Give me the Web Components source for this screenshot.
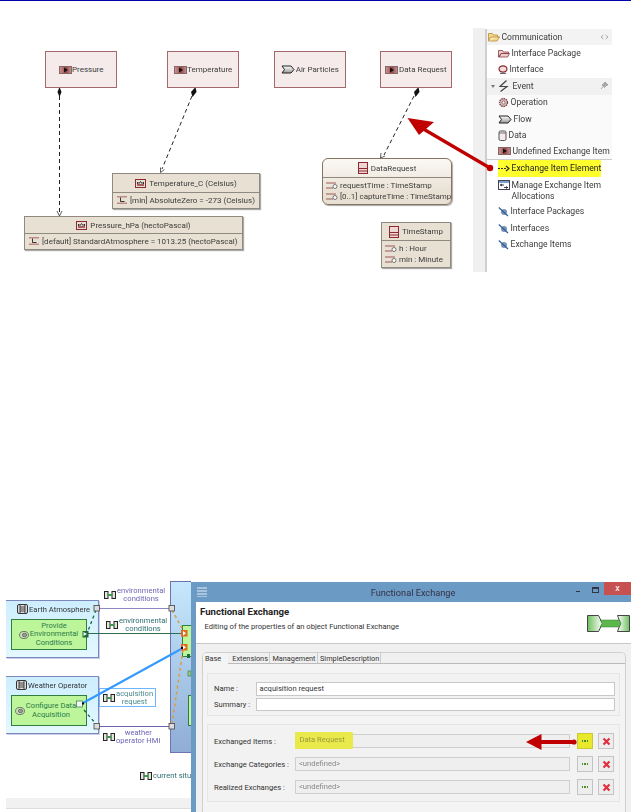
<!DOCTYPE html>
<html lang="en"><head><meta charset="utf-8"><title>Exchange items</title>
<style>
html,body{margin:0;padding:0;background:#fff;overflow:hidden}
body{width:631px;height:812px;font-family:Roboto,"Noto Sans",sans-serif;font-size:8.6px;color:#333;display:flex;flex-direction:column}
</style></head><body>
<top-rule></top-rule>
<figure-one>
  <uml-canvas>
    <svg slot="edges" width="473" height="279" viewBox="0 1 473 279" fill="none">
      <g stroke="#222" stroke-width="1" stroke-dasharray="4 3">
        <path d="M59.5 96V213"/>
        <path d="M192 96L162 169"/>
        <path d="M414 96L384 155"/>
      </g>
      <g fill="#111">
        <path d="M59.5 87l2 5-2 5-2-5z"/>
        <path d="M195.5 87l1 5-4 5-1.500-5z"/>
        <path d="M418.500 87l1 5-4 5-1.500-5z"/>
      </g>
      <g stroke="#333" stroke-width=".8">
        <path d="M57 211l2.500 5 2.500-5"/>
        <path d="M160.500 167.500v5l4-3"/>
        <path d="M381 153l-.5 5 4.500-2"/>
      </g>
    </svg>
    <ex-item style="left:45px;top:50px;width:70px" icon="item">Pressure</ex-item>
    <ex-item style="left:167px;top:50px;width:70px" icon="item">Temperature</ex-item>
    <ex-item style="left:274px;top:50px;width:70px" icon="flow">Air Particles</ex-item>
    <ex-item style="left:380px;top:50px;width:70px" icon="item">Data Request</ex-item>
    <uml-class style="left:112px;top:172px;width:146px" title-text="Temperature_C (Celsius)" icon="unit" head="18">
      <uml-row icon="literal">[min] AbsoluteZero = -273 (Celsius)</uml-row>
    </uml-class>
    <uml-class style="left:24px;top:215px;width:217px" title-text="Pressure_hPa (hectoPascal)" icon="unit" head="16">
      <uml-row icon="literal">[default] StandardAtmosphere = 1013.25 (hectoPascal)</uml-row>
    </uml-class>
    <uml-class style="left:322px;top:157px;width:128px" title-text="DataRequest" icon="cls" head="18" round>
      <uml-row icon="prop" tight>requestTime : TimeStamp</uml-row>
      <uml-row icon="prop" tight>[0..1] captureTime : TimeStamp</uml-row>
    </uml-class>
    <uml-class style="left:381px;top:221px;width:68px" title-text="TimeStamp" icon="cls" head="17">
      <uml-row icon="prop" tight>h : Hour</uml-row>
      <uml-row icon="prop" tight>min : Minute</uml-row>
    </uml-class>
  </uml-canvas>
  <tool-palette>
    <pal-row kind="head" icon="folder" trail="collapse">Communication</pal-row>
    <pal-row icon="pkg">Interface Package</pal-row>
    <pal-row icon="iface">Interface</pal-row>
    <pal-row kind="head2" icon="bolt" trail="pin">Event</pal-row>
    <pal-row kind="soft" icon="gear">Operation</pal-row>
    <pal-row kind="soft" icon="flow">Flow</pal-row>
    <pal-row kind="soft" icon="data">Data</pal-row>
    <pal-row kind="soft end" icon="item">Undefined Exchange Item</pal-row>
    <pal-row kind="mark" icon="dash">Exchange Item Element</pal-row>
    <pal-row kind="tall" icon="manage">Manage Exchange Item<br>Allocations</pal-row>
    <pal-row icon="strike">Interface Packages</pal-row>
    <pal-row icon="strike">Interfaces</pal-row>
    <pal-row icon="strike">Exchange Items</pal-row>
  </tool-palette>
  <svg style="position:absolute;left:0;top:0;pointer-events:none" width="631" height="279" viewBox="0 1 631 279">
    <path d="M490 168L420 127" stroke="#c00000" stroke-width="3.200" fill="none"/>
    <circle cx="490" cy="168" r="3.200" fill="#c00000"/>
    <path d="M407.500 118L434 122L419 135z" fill="#c00000"/>
  </svg>
</figure-one>
<figure-two>
  <sys-canvas>
    <big-block style="left:170px;top:1px;width:30px;height:172px"></big-block>
    <act-box style="left:6px;top:20px;width:92px;height:56px" label="Earth Atmosphere" lx="11"></act-box>
    <act-box style="left:6px;top:96px;width:92px;height:56px" label="Weather Operator" lx="10"></act-box>
    <fn-box style="left:11px;top:39px;width:76px;height:31px" tag="sf" tagx="7" pad="10">Provide<br>Environmental<br>Conditions</fn-box>
    <fn-box style="left:11px;top:115px;width:76px;height:31px" tag="sf" tagx="3" pad="4">Configure Data<br>Acquisition</fn-box>
    <fn-box style="left:182px;top:45px;width:30px;height:32px"></fn-box>
    <fn-box style="left:188px;top:115px;width:30px;height:31px"></fn-box>
    <note-box style="left:99px;top:108px;width:57px;height:19px"></note-box>
    <svg style="position:absolute;left:0;top:0" width="191" height="232" viewBox="0 580 191 232" fill="none">
      <path d="M97 608.500H171" stroke="#9088c4"/>
      <path d="M97 726.500H171" stroke="#6f64b0"/>
      <path d="M86 633.500H184" stroke="#2e6e50"/>
      <path d="M96 610L88 631" stroke="#126a3a" stroke-width="1.300" stroke-dasharray="3 3"/>
      <path d="M84 710L96 724" stroke="#126a3a" stroke-width="1.300" stroke-dasharray="3 3"/>
      <path d="M172 610L183 630" stroke="#e09a3c" stroke-width="1.500" stroke-dasharray="3 3"/>
      <path d="M183 650L172 724" stroke="#e09a3c" stroke-width="1.500" stroke-dasharray="3 3"/>
      <path d="M83 703L183 648" stroke="#3399ff" stroke-width="2"/>
      <g fill="#ddd" stroke="#444" stroke-width=".8">
        <rect x="94" y="605.500" width="5.500" height="5.500"/><rect x="169" y="605.500" width="5.500" height="5.500"/>
        <rect x="94" y="723.500" width="5.500" height="5.500"/><rect x="169" y="723.500" width="5.500" height="5.500"/>
      </g>
      <rect x="82.500" y="631" width="6" height="6.500" fill="#1d6b3a"/><path d="M83.500 632l3.500 2-3.500 2z" fill="#fff"/>
      <rect x="76.500" y="701" width="6" height="6" fill="#f4f4f4" stroke="#2d7a49" stroke-width=".7"/>
      <rect x="82" y="702.500" width="2" height="2" fill="#000"/>
      <rect x="181" y="630" width="6.500" height="6.500" fill="#dd6a20"/><path d="M183 631l3 2.200-3 2.200z" fill="#fff"/>
      <rect x="181" y="644" width="6.500" height="6.500" fill="#dd6a20"/><path d="M183 645l3 2.200-3 2.200z" fill="#fff"/>
      <rect x="181" y="647" width="2" height="2" fill="#000"/>
      <rect x="187" y="654" width="3" height="4" fill="#1d6b3a"/>
      <rect x="188" y="671" width="3" height="5" fill="#9bc977" stroke="#2d7a49" stroke-width=".6"/>
    </svg>
    <ex-label tone="violet" at="104" y="7">environmental<br>conditions</ex-label>
    <ex-label tone="teal" at="106" y="37">environmental<br>conditions</ex-label>
    <ex-label tone="teal2" at="103" y="110">acquisition<br>request</ex-label>
    <ex-label tone="violet" at="103" y="149">weather<br>operator HMI</ex-label>
    <ex-label tone="teal" at="140" y="192">current situ</ex-label>
    <status-strip></status-strip>
  </sys-canvas>
  <dialog-window heading="Functional Exchange">
    <dialog-head title-text="Functional Exchange" sub="Editing of the properties of an object Functional Exchange"></dialog-head>
    <tab-folder>
      <form-group slot="body" kind="a">
        <form-line label="Name :" value="acquisition request" ></form-line>
        <form-line label="Summary :" value=""></form-line>
      </form-group>
      <form-group slot="body" kind="b">
        <ref-line label="Exchanged Items :" value="Data Request" hot></ref-line>
        <ref-line label="Exchange Categories :" value="&lt;undefined&gt;"></ref-line>
        <ref-line label="Realized Exchanges :" value="&lt;undefined&gt;"></ref-line>
      </form-group>
    </tab-folder>
    <svg slot="over" width="52" height="18" viewBox="0 0 52 18" style="position:absolute;left:335px;top:151px">
      <path d="M0 9L15.500 1V7H46V11H15.500V17z" fill="#c00000"/><circle cx="48" cy="9" r="2.600" fill="#c00000"/>
    </svg>
  </dialog-window>
</figure-two>
<script>
const ICONS={
item:[13,8,'<defs><linearGradient id="g" x1="0" x2="1" y1="0" y2="0"><stop offset="0" stop-color="#c99"/><stop offset=".55" stop-color="#944"/><stop offset="1" stop-color="#b99"/></linearGradient></defs><rect x=".5" y=".5" width="12" height="7" fill="url(#g)" stroke="#866"/><path d="M5 1.500l4 2.500-4 2.500z" fill="#111"/>'],
flow:[14,9,'<defs><linearGradient id="g" x1="0" x2="0" y1="0" y2="1"><stop offset="0" stop-color="#fff"/><stop offset="1" stop-color="#999"/></linearGradient></defs><path d="M1 1h9l3 3.500-3 3.500H1l2.500-3.500z" fill="url(#g)" stroke="#222"/>'],
unit:[11,9,'<rect x=".5" y=".5" width="10" height="8" fill="#eadfd5" stroke="#8a2a30"/><path d="M2 6h7" stroke="#8a2a30" stroke-width="1.400"/><path d="M2.500 5V3l1.500 1.500L5.500 2.500 7 4.500 8.500 3v2" fill="none" stroke="#222" stroke-width=".9"/>'],
literal:[11,8,'<path d="M0 .8h10M0 7.200h10" stroke="#c08a8a" stroke-width="1.400"/><path d="M3.500 1.500v4h4" fill="none" stroke="#222" stroke-width=".9"/>'],
cls:[10,12,'<rect x=".5" y=".5" width="9" height="11" fill="#f0d5d5" stroke="#8a2a30"/><path d="M.5 6.500h9M.5 9h9" stroke="#8a2a30"/>'],
prop:[12,7,'<path d="M0 1h10M0 6h7" stroke="#9a5a5a" stroke-width="1.100"/><circle cx="9" cy="4.500" r="2" fill="#fff" stroke="#555" stroke-width=".8"/>'],
folder:[12,10,'<path d="M.5 9V1.500h4l1 1.500h4v2h2l-2.500 4z" fill="#f4d98a" stroke="#b98a3a" stroke-width=".8"/><path d="M.5 9l2-4h9" fill="#f9e8b0" stroke="#b98a3a" stroke-width=".8"/>'],
pkg:[12,9,'<path d="M.5 8V1.500h4L5.500 3h5v1.500H3L1 8zM1 8l2-3.500h8.500L9.500 8z" fill="#ecd0d0" stroke="#8a3a3a" stroke-width=".8"/>'],
iface:[10,9,'<ellipse cx="5" cy="4" rx="4" ry="3.200" fill="#f3dede" stroke="#8a2a30" stroke-width="1.200"/><path d="M2 8.400h6" stroke="#555"/>'],
bolt:[10,12,'<path d="M7.500 .5L1 6.500h7L1.500 11.500" fill="none" stroke="#444" stroke-width="1.200"/>'],
gear:[11,11,'<circle cx="5.500" cy="5.500" r="4" fill="#d9b8b8" stroke="#7a4a4a" stroke-dasharray="1.500 .8" stroke-width="1.300"/><circle cx="5.500" cy="5.500" r="1.500" fill="#fff" stroke="#7a4a4a" stroke-width=".7"/>'],
data:[9,11,'<rect x="1" y="1" width="7" height="9.500" rx="1.500" fill="#f5e9e9" stroke="#444" stroke-width=".9"/><path d="M1 3h7" stroke="#444" stroke-width=".7"/>'],
dash:[12,7,'<path d="M0 3.500h9" stroke="#333" stroke-dasharray="2 1"/><path d="M8 1l3 2.500L8 6" fill="none" stroke="#222" stroke-width="1.100"/>'],
manage:[12,10,'<rect x=".5" y=".5" width="11" height="9" fill="#fff" stroke="#445"/><rect x="1" y="1" width="10" height="2" fill="#7aa2cc"/><path d="M2 5h4M4 4l-1.500 1L4 6M6 7.500h4M8 6.500l1.500 1L8 8.500" stroke="#111" fill="none" stroke-width=".8"/>'],
strike:[11,11,'<circle cx="6" cy="6" r="3" fill="#7c93b8"/><path d="M.8 1.500L10 10" stroke="#2d5f9a" stroke-width="1.200"/>'],
link:[12,8,'<rect x=".5" y=".5" width="3.500" height="7" fill="#dfe8d8" stroke="#222"/><rect x="8" y=".5" width="3.500" height="7" fill="#dfe8d8" stroke="#222"/><path d="M4 4h4" stroke="#3a9a4a" stroke-width="2"/>'],
actor:[11,10,'<rect x=".5" y=".5" width="10" height="9" rx="1.500" fill="#ddd" stroke="#333"/><path d="M3 1v8M8 1v8M3 3h5M3 5h5M3 7h5" stroke="#222" stroke-width=".8"/>'],
sf:[10,8,'<ellipse cx="5" cy="4" rx="4.400" ry="3.500" fill="#cfe8b8" stroke="#555" stroke-width=".8"/><ellipse cx="5.500" cy="4" rx="2.200" ry="1.800" fill="#999" stroke="#444" stroke-width=".6"/>']
};
const el=(name,css,html,after)=>customElements.define(name,class extends HTMLElement{
  constructor(){super();this.attachShadow({mode:'open'}).innerHTML='<style>'+css+'</style>'+html;}
  connectedCallback(){after&&after(this,this.shadowRoot);}
});
const attr=(h,k,d='')=>h.getAttribute(k)??d;
let uid=0;
customElements.define('ui-icon',class extends HTMLElement{
  static get observedAttributes(){return['name']}
  constructor(){super();this.attachShadow({mode:'open'});}
  attributeChangedCallback(){this.draw()}
  connectedCallback(){this.draw()}
  draw(){const i=ICONS[this.getAttribute('name')];if(!i)return;const id='g'+(++uid);
    this.shadowRoot.innerHTML='<style>:host{display:inline-flex;flex:none}svg{display:block}</style><svg width="'+i[0]+'" height="'+i[1]+'" viewBox="0 0 '+i[0]+' '+i[1]+'">'+i[2].replace('id="g"','id="'+id+'"').replace('url(#g)','url(#'+id+')')+'</svg>';}
});
el('top-rule',':host{display:block;flex:none;height:1px;background:#0000a8}','');
el('figure-one',':host{display:flex;flex:none;height:279px;position:relative;filter:blur(.4px)}','<slot></slot>');
el('uml-canvas',':host{display:block;flex:none;width:473px;height:279px;position:relative;font-size:8px}','<slot name="edges"></slot><slot></slot>');
el('ex-item',':host{position:absolute;display:flex;align-items:center;justify-content:center;gap:.5px;height:35px;background:#f6ebeb;border:1px solid #a4686c;white-space:nowrap;color:#3c3c3c}','<ui-icon></ui-icon><slot></slot>',(h,s)=>s.querySelector('ui-icon').setAttribute('name',attr(h,'icon')));
el('uml-class',':host{position:absolute;display:block;background:#e8e0d3;border:1px solid #8f8a80;box-shadow:1px 1px 1px #aaa;color:#3c3c3c;white-space:nowrap}:host([round]){border-radius:6px;background:linear-gradient(#fbf9f5,#e8e0d3 75%);border-color:#85745f}.h{display:flex;align-items:center;justify-content:center;gap:3px;border-bottom:1px solid #8f8a80}.b{display:block;padding:1.500px 0}','<div class="h"><ui-icon></ui-icon><span></span></div><div class="b"><slot></slot></div>',(h,s)=>{s.querySelector('ui-icon').setAttribute('name',attr(h,'icon'));s.querySelector('span').textContent=attr(h,'title-text');s.querySelector('.h').style.height=attr(h,'head','18')+'px';});
el('uml-row',':host{display:flex;align-items:center;gap:2px;height:11.500px;padding-left:4px}:host([tight]){padding-left:3px}','<ui-icon></ui-icon><span><slot></slot></span>',(h,s)=>s.querySelector('ui-icon').setAttribute('name',attr(h,'icon')));
el('tool-palette',':host{display:block;flex:none;width:125px;height:243px;margin:28px 0 0 12px;border-left:2px solid #cfcfcf;position:relative;line-height:10.700px;color:#3c3c3c}:host::before{content:"";position:absolute;left:-14px;top:-1px;bottom:0;width:12px;background:#f0f0f0}','<slot></slot>');
el('pal-row',':host{display:flex;align-items:center;gap:1.500px;height:16.400px;padding-left:11px;box-sizing:border-box;white-space:nowrap;position:relative}:host([kind~=head]){padding-left:1px;background:#f3f3f3;height:16px}:host([kind~=head2]){padding-left:12px;background:#f1f1f1;height:16.800px;gap:3.500px}:host([kind~=soft]){background:#fafafa}:host([kind~=end]){border-bottom:1px solid #ccc}:host([kind~=tall]){height:27px;align-items:flex-start;padding-top:3.500px}.tw{position:absolute;left:4px;top:7px;width:0;height:0;border:2px solid transparent;border-top:3px solid #777;display:none}:host([kind~=head2]) .tw{display:block}.tr{position:absolute;right:3px;top:3px}:host([kind~=mark]){background:linear-gradient(#ffff2e,#ffff2e) 11px 0/103px 100% no-repeat;color:#222}','<i class="tw"></i><ui-icon></ui-icon><span><slot></slot></span><svg class="tr" width="9" height="10" viewBox="0 0 9 10"></svg>',(h,s)=>{s.querySelector('ui-icon').setAttribute('name',attr(h,'icon'));const t=s.querySelector('.tr'),k=attr(h,'trail');if(k==='pin')t.innerHTML='<path d="M5 1l3 3-2 .5-1.500 2L2 4l2-1.500zM3 5.500L1 8" stroke="#999" fill="#aaa" stroke-width=".8"/>';else if(k==='collapse')t.innerHTML='<path d="M3.500 3L1 5l2.500 2M5.500 3L8 5 5.500 7" stroke="#aaa" fill="none"/>';else t.remove();});
el('figure-two',':host{display:flex;flex:none;height:232px;margin-top:300px;filter:blur(.4px)}','<slot></slot>');
el('sys-canvas',':host{display:block;flex:none;width:191px;height:232px;position:relative;overflow:hidden;font-size:7.600px}','<slot></slot>');
el('big-block',':host{position:absolute;display:block;box-sizing:border-box;background:linear-gradient(#c6e8fd,#8fadd6);border:1px solid #6c74b0}','');
el('act-box',':host{position:absolute;display:block;background:linear-gradient(#cdeeff,#e4f8ff);border:1px solid #7e86c0;border-left:0;box-shadow:1px 1px 0 #c9cfe8;color:#333;white-space:nowrap}.l{position:absolute;top:3px;display:flex;align-items:center;gap:1px}','<div class="l"><ui-icon name="actor"></ui-icon><span></span></div>',(h,s)=>{s.querySelector('span').textContent=attr(h,'label');s.querySelector('.l').style.left=attr(h,'lx')+'px';});
el('fn-box',':host{position:absolute;display:flex;align-items:center;justify-content:center;box-sizing:border-box;background:#bdf69a;border:1px solid #2f7d43;color:#2a7a4a;text-align:center;line-height:8.200px;white-space:nowrap}.t{position:absolute;top:50%;margin-top:-4px}','<ui-icon class="t"></ui-icon><span><slot></slot></span>',(h,s)=>{const t=s.querySelector('.t');if(!attr(h,'tag'))t.remove();else{t.setAttribute('name',attr(h,'tag'));t.style.left=attr(h,'tagx','4')+'px';}s.querySelector('span').style.paddingLeft=attr(h,'pad','0')+'px';});
el('note-box',':host{position:absolute;display:block;box-sizing:border-box;background:#fff;border:1px solid #6cb8ff}','');
el('ex-label',':host{position:absolute;display:flex;align-items:center;gap:1px;line-height:8.200px;text-align:center;white-space:nowrap}:host([tone=violet]){color:#6e66b4}:host([tone=teal]){color:#2e6e70}:host([tone=teal2]){color:#4a8a90}','<ui-icon name="link"></ui-icon><span><slot></slot></span>',(h)=>{h.style.left=attr(h,'at')+'px';h.style.top=attr(h,'y')+'px';});
el('status-strip',':host{position:absolute;left:6px;right:0;top:218px;height:10px;background:#f1f1f1;box-shadow:0 1px 0 #ddd;display:block}','');
el('dialog-window',':host{display:flex;flex-direction:column;flex:none;width:440px;height:230px;margin-top:2px;position:relative;overflow:hidden;background:#6b9ac4;font-size:7.600px}.t{flex:none;height:20px;display:flex;align-items:center;justify-content:center;font-size:9.200px;color:#334;position:relative;padding-left:4px}.m{position:absolute;left:6px;top:5px;width:10px;height:10px;background:repeating-linear-gradient(#a9c4dc 0 2px,#6b9ac4 2px 3px)}.c{position:absolute;right:0;top:0;width:27px;height:13px;background:#c75050;color:#fff;font-size:9px;line-height:13px;text-align:center;font-weight:400}.w{position:absolute;top:9px;left:385px;width:4px;height:1px;background:#334}.x{position:absolute;top:5px;left:401px;width:5px;height:3px;border:1px solid #334;border-top-width:2px}.bd{flex:1;display:flex;flex-direction:column;margin-left:5px;background:#f0f0f0;min-height:0}','<div class="t"><i class="m"></i><span></span><i class="w"></i><i class="x"></i><b class="c">x</b></div><div class="bd"><slot></slot></div><slot name="over"></slot>',(h,s)=>s.querySelector('.t span').textContent=attr(h,'heading'));
el('dialog-head',':host{display:flex;flex:none;height:42px;box-sizing:border-box;background:#fff;border-bottom:1px solid #c8c8c8;position:relative;color:#333}.a{padding:4px 0 0 4px}.tt{font-weight:700;font-size:9.600px;line-height:12px;color:#222}.ss{padding-left:4.500px;line-height:12px;margin-top:3px}svg{position:absolute;left:391px;top:13px}','<div class="a"><div class="tt"></div><div class="ss"></div></div><svg width="43" height="17" viewBox="0 0 43 17"><defs><linearGradient id="lg" x1="0" x2="1" y1="0" y2="0"><stop offset="0" stop-color="#6fbf5e"/><stop offset="1" stop-color="#fff"/></linearGradient><linearGradient id="rg" x1="1" x2="0" y1="0" y2="0"><stop offset="0" stop-color="#6fbf5e"/><stop offset="1" stop-color="#fff"/></linearGradient></defs><path d="M.5.500h11l4 8-4 8H.5z" fill="url(#lg)" stroke="#444"/><path d="M42.500.500h-12l3 8-3 8h12z" fill="url(#rg)" stroke="#444"/><path d="M13 5h19l2 3.500-2 3.500H13l2-3.500z" fill="#5cb84c" stroke="#3a7a3a" stroke-width=".5"/></svg>',(h,s)=>{s.querySelector('.tt').textContent=attr(h,'title-text');s.querySelector('.ss').textContent=attr(h,'sub');});
el('tab-folder',':host{display:block;flex:none;margin:8px 5px 0 6px;background:#f4f4f4;border:1px solid #cfcfcf;border-bottom:0;border-radius:5px 5px 0 0;height:170px;overflow:hidden;color:#333}.s{display:flex;height:10px;border-bottom:1px solid #bbb;background:#f0f0f0;line-height:11px;white-space:nowrap;font-size:7.300px}.s span{padding:0 1.200px;border-right:1px solid #ccc;margin-right:1.200px}.s .on{background:#f4f4f4;padding:0 7px 0 2px;margin-right:3px;height:11px;border-right:0}.p{padding:9px 5px 0 4px;display:flex;flex-direction:column;gap:8px}','<div class="s"><span class="on">Base</span><span>Extensions</span><span>Management</span><span>SimpleDescription</span></div><div class="p"><slot name="body"></slot></div>');
el('form-group',':host{display:flex;flex-direction:column;flex:none;background:#f2f2f2;border:1px solid #e6e6e6;box-sizing:border-box}:host([kind=a]){height:43px;padding:8px 4px 0 6px;gap:2px}:host([kind=b]){height:78px;padding:8px 0 0 6px;gap:7px}','<slot></slot>');
el('form-line',':host{display:grid;grid-template-columns:41.500px 1fr;align-items:center;height:13.500px;white-space:nowrap}.f{height:13.500px;box-sizing:border-box;background:#fff;border:1px solid #c8c8c8;padding-left:3px;line-height:11.500px;color:#333}','<span class="l"></span><div class="f"></div>',(h,s)=>{s.querySelector('.l').textContent=attr(h,'label');s.querySelector('.f').textContent=attr(h,'value');});
el('ref-line',':host{display:grid;grid-template-columns:81px 275px 23px 21px;align-items:center;height:16px;white-space:nowrap}.f{position:relative;height:13.500px;box-sizing:border-box;background:#efefef;border:1px solid #cfcfcf;padding-left:3px;line-height:11.500px;color:#888}.hl{position:absolute;left:-1px;top:-3px;width:58px;height:17px;background:#e9e94c;border-radius:1px;color:#9a9a3a;padding-left:4.500px;box-sizing:border-box;line-height:16.500px}.b{justify-self:end;width:16px;height:16px;box-sizing:border-box;background:#ededed;border:1px solid #c4c4c4;display:flex;align-items:center;justify-content:center;gap:1px}.b i{width:1.500px;height:1.500px;background:#4c8a2a}.d.hot{background:#e9e92c;border-color:#c8c83a}','<span class="l"></span><div class="f"><span class="v"></span></div><div class="b d"><i></i><i></i><i></i></div><div class="b e"><svg width="9" height="9" viewBox="0 0 9 9"><path d="M1.500 1.500l6 6M7.500 1.500l-6 6" stroke="#e03040" stroke-width="2.200"/></svg></div>',(h,s)=>{s.querySelector('.l').textContent=attr(h,'label');const v=s.querySelector('.v');v.textContent=attr(h,'value');if(h.hasAttribute('hot')){v.className='hl';s.querySelector('.d').classList.add('hot');}});
</script>
</body></html>
